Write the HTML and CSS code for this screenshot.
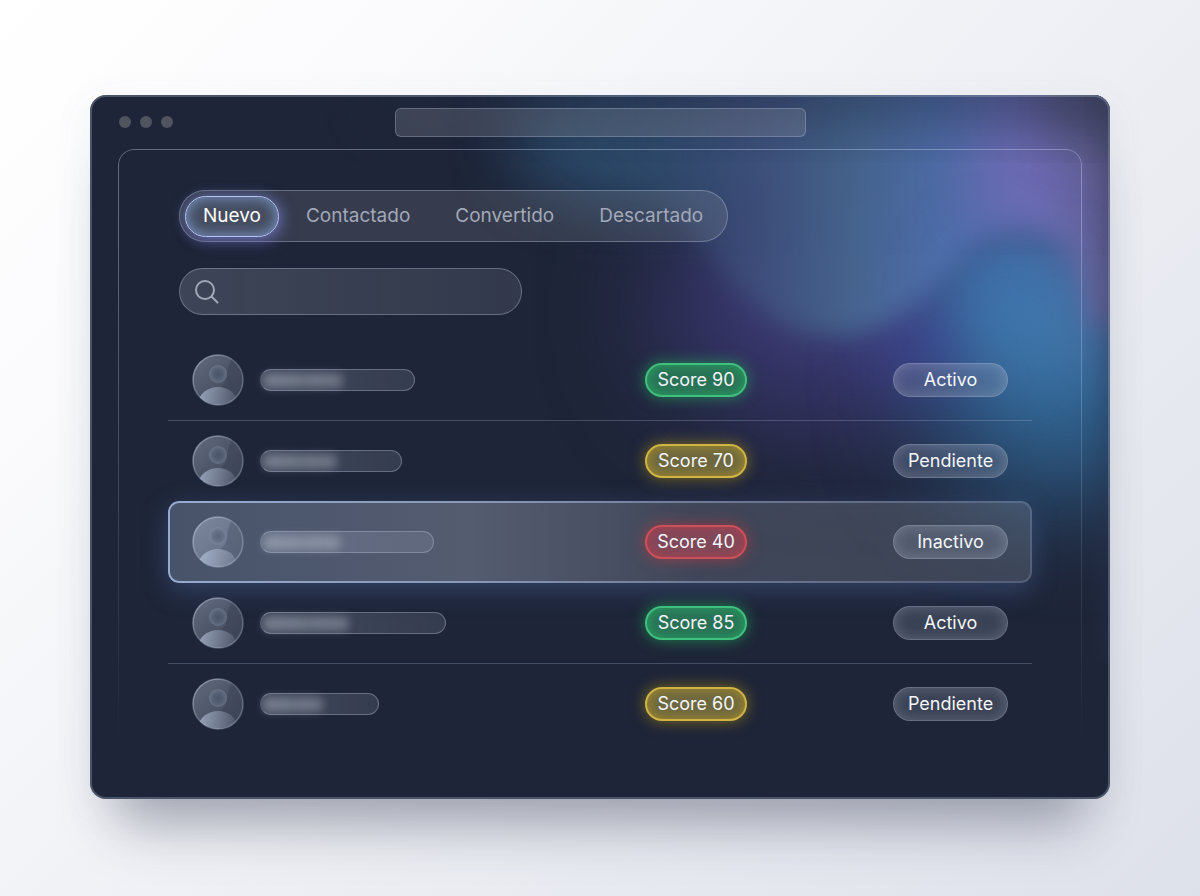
FILE: index.html
```
<!DOCTYPE html>
<html lang="es">
<head>
<meta charset="utf-8">
<meta name="viewport" content="width=device-width, initial-scale=1">
<title>Leads</title>
<link rel="stylesheet" href="styles.css">
</head>
<body>
<svg width="0" height="0" class="defs" aria-hidden="true">
  <defs>
    <linearGradient id="face" x1="0" y1="0" x2="1" y2="1">
      <stop offset="0" stop-color="#d3dff0" stop-opacity=".38"/>
      <stop offset=".5" stop-color="#d3dff0" stop-opacity=".26"/>
      <stop offset="1" stop-color="#d3dff0" stop-opacity=".2"/>
    </linearGradient>
    <linearGradient id="rim" x1="0" y1="0" x2="1" y2="1">
      <stop offset="0" stop-color="#cfdcf5" stop-opacity=".6"/>
      <stop offset=".5" stop-color="#cfdcf5" stop-opacity=".25"/>
      <stop offset="1" stop-color="#cfdcf5" stop-opacity=".35"/>
    </linearGradient>
    <linearGradient id="bust" x1="0" y1="0.2" x2="1" y2="0.3">
      <stop offset="0" stop-color="#cfdcf5" stop-opacity=".55"/>
      <stop offset="1" stop-color="#cfdcf5" stop-opacity=".06"/>
    </linearGradient>
    <radialGradient id="head">
      <stop offset="0" stop-color="#465268" stop-opacity=".5"/>
      <stop offset=".6" stop-color="#5c687e" stop-opacity=".5"/>
      <stop offset="1" stop-color="#8090a8" stop-opacity=".45"/>
    </radialGradient>
    <clipPath id="disc"><circle cx="26" cy="26" r="25"/></clipPath>
    <symbol id="avatar" viewBox="0 0 52 52">
      <circle cx="26" cy="26" r="25" fill="url(#face)"/>
      <g clip-path="url(#disc)">
        <path d="M40 3C38 9 36 13 35 20C35 27 32 31 28 33Q40 34 44 45L54 40V8Z" fill="#1c2438" opacity=".2"/>
        <ellipse cx="26" cy="48" rx="19" ry="15" fill="url(#bust)"/>
      </g>
      <circle cx="26" cy="20" r="9" fill="url(#head)"/>
      <circle cx="26" cy="26" r="25" fill="none" stroke="url(#rim)" stroke-width="1.5"/>
    </symbol>
  </defs>
</svg>
<main class="window">
  <svg class="aurora" viewBox="0 0 1020 704" preserveAspectRatio="none" aria-hidden="true">
    <defs>
      <filter id="soft" x="-30%" y="-30%" width="160%" height="160%" color-interpolation-filters="sRGB"><feGaussianBlur stdDeviation="12"/></filter>
      <filter id="haze" x="-80%" y="-80%" width="260%" height="260%" color-interpolation-filters="sRGB"><feGaussianBlur stdDeviation="32"/></filter>
      <filter id="mist" x="-80%" y="-80%" width="260%" height="260%" color-interpolation-filters="sRGB"><feGaussianBlur stdDeviation="55"/></filter>
      <linearGradient id="wave" gradientUnits="userSpaceOnUse" x1="360" y1="0" x2="1020" y2="0">
        <stop offset="0" stop-color="#28405a" stop-opacity="0"/>
        <stop offset=".12" stop-color="#283f5a" stop-opacity=".2"/>
        <stop offset=".3" stop-color="#30496a" stop-opacity=".5"/>
        <stop offset=".46" stop-color="#40517e" stop-opacity=".9"/>
        <stop offset=".6" stop-color="#476890"/>
        <stop offset=".74" stop-color="#5273b0"/>
        <stop offset=".88" stop-color="#716fba"/>
        <stop offset="1" stop-color="#6a6398"/>
      </linearGradient>
    </defs>
    <ellipse cx="760" cy="215" rx="195" ry="120" fill="#39366e" filter="url(#mist)"/>
    <ellipse cx="970" cy="280" rx="130" ry="125" fill="#30628f" filter="url(#mist)"/>
    <ellipse cx="840" cy="245" rx="60" ry="35" fill="#42429a" opacity=".7" filter="url(#haze)"/>
    <ellipse cx="950" cy="220" rx="85" ry="75" fill="#3f78ac" opacity=".9" filter="url(#haze)"/>
    <ellipse cx="570" cy="50" rx="150" ry="60" fill="#305274" opacity=".9" filter="url(#haze)"/>
    <path d="M340-60C400 90 560 100 600 150C640 200 680 240 745 240C800 240 835 205 880 165C930 130 980 140 1000 270L1090 260V-60Z" fill="url(#wave)" opacity=".35" filter="url(#haze)"/>
    <path d="M340-60C400 70 560 70 600 130C640 190 680 240 745 240C800 240 835 205 880 155C930 120 980 120 1000 230L1090 220V-60Z" fill="url(#wave)" opacity=".85" filter="url(#soft)"/>
    <ellipse cx="915" cy="180" rx="60" ry="40" fill="#4175b2" opacity=".75" filter="url(#haze)"/>
    <ellipse cx="935" cy="80" rx="45" ry="50" fill="#7670be" opacity=".6" filter="url(#haze)"/>
    <ellipse cx="1020" cy="0" rx="70" ry="50" fill="#44475e" opacity=".8" filter="url(#haze)"/>
    <rect x="300" y="-40" width="760" height="60" fill="#222b45" opacity=".6" filter="url(#haze)"/>
    <rect x="1012" y="-60" width="60" height="620" fill="#2b3350" opacity=".4" filter="url(#soft)"/>
  </svg>
  <header class="titlebar">
    <div class="lights"><span></span><span></span><span></span></div>
    <input class="address" type="text" aria-label="Dirección">
  </header>
  <section class="panel">
    <nav class="tabs">
      <button class="tab tab-active" type="button">Nuevo</button>
      <button class="tab" type="button">Contactado</button>
      <button class="tab" type="button">Convertido</button>
      <button class="tab" type="button">Descartado</button>
    </nav>
    <label class="search">
      <svg width="26" height="26" viewBox="0 0 26 26" fill="none" stroke="#a1a8b8" stroke-width="2" stroke-linecap="round" aria-hidden="true"><circle cx="11" cy="11" r="9"/><path d="M17.5 17.5L23.5 23.5"/></svg>
      <input type="search" aria-label="Buscar">
    </label>
    <table class="leads">
      <tbody>
        <tr class="lead">
          <td class="who"><svg class="avatar"><use href="#avatar"/></svg><span class="name" style="width:155px"><i class="smudge" style="width:80px"></i></span></td>
          <td class="score-cell"><span class="pill score green">Score 90</span></td>
          <td><span class="pill status">Activo</span></td>
        </tr>
        <tr class="lead">
          <td class="who"><svg class="avatar"><use href="#avatar"/></svg><span class="name" style="width:142px"><i class="smudge" style="width:74px"></i></span></td>
          <td class="score-cell"><span class="pill score yellow">Score 70</span></td>
          <td><span class="pill status">Pendiente</span></td>
        </tr>
        <tr class="lead lead-selected">
          <td class="who"><svg class="avatar"><use href="#avatar"/></svg><span class="name" style="width:174px"><i class="smudge" style="width:78px"></i></span></td>
          <td class="score-cell"><span class="pill score red">Score 40</span></td>
          <td><span class="pill status">Inactivo</span></td>
        </tr>
        <tr class="lead">
          <td class="who"><svg class="avatar"><use href="#avatar"/></svg><span class="name" style="width:186px"><i class="smudge" style="width:86px"></i></span></td>
          <td class="score-cell"><span class="pill score green">Score 85</span></td>
          <td><span class="pill status">Activo</span></td>
        </tr>
        <tr class="lead">
          <td class="who"><svg class="avatar"><use href="#avatar"/></svg><span class="name" style="width:119px"><i class="smudge" style="width:60px"></i></span></td>
          <td class="score-cell"><span class="pill score yellow">Score 60</span></td>
          <td><span class="pill status">Pendiente</span></td>
        </tr>
      </tbody>
    </table>
  </section>
</main>
</body>
</html>
```
FILE: styles.css
```
* {
  box-sizing: border-box;
}

body {
  margin: 0;
  min-height: 100vh;
  padding: 95px 90px 96px;
  font-family: Inter, "Liberation Sans", sans-serif;
  background: linear-gradient(135deg, #ffffff 0%, #fbfbfd 20%, #eceef3 58%, #dde1ea 100%);
}

.defs {
  position: absolute;
}

.window {
  position: relative;
  border-radius: 16px;
  background: #1e2538;
  box-shadow: 0 54px 50px -28px rgba(50, 54, 80, .38), 0 10px 40px rgba(90, 96, 120, .08);
}

.window::after {
  content: "";
  position: absolute;
  inset: 0;
  border: 2px solid rgba(150, 165, 185, .38);
  border-radius: 16px;
  pointer-events: none;
}

.aurora {
  position: absolute;
  inset: 0;
  width: 100%;
  height: 100%;
  border-radius: 16px;
  overflow: hidden;
}

.titlebar {
  position: relative;
  display: grid;
  grid-template-columns: 1fr 411px 1fr;
  align-items: center;
  height: 54px;
  padding: 0 29px;
}

.lights {
  display: flex;
  gap: 9px;
}

.lights span {
  width: 12px;
  height: 12px;
  border-radius: 50%;
  background: #50545f;
}

.address {
  height: 29px;
  border: 1px solid rgba(190, 205, 230, .3);
  border-radius: 6px;
  background: rgba(150, 155, 165, .26);
  outline: none;
}

.panel {
  position: relative;
  margin: 0 28px;
  padding: 41px 50px 54px;
}

.panel::before {
  content: "";
  position: absolute;
  inset: 0;
  border: 1px solid rgba(190, 205, 235, .42);
  border-bottom: 0;
  border-radius: 16px 16px 0 0;
  -webkit-mask-image: linear-gradient(#000 10%, transparent 92%);
  mask-image: linear-gradient(#000 10%, transparent 92%);
  pointer-events: none;
}

.tabs {
  position: relative;
  display: flex;
  align-items: center;
  gap: 9px;
  width: fit-content;
  height: 52px;
  margin-left: 11px;
  padding: 0 6px 0 5px;
  border: 1px solid rgba(190, 200, 225, .36);
  border-radius: 26px;
  background: rgba(150, 155, 165, .2);
}

.tab {
  height: 41px;
  padding: 0 18px;
  border: 0;
  border-radius: 21px;
  background: none;
  color: #a2a8b8;
  font: 400 19px/24px Inter, "Liberation Sans", sans-serif;
}

.tab-active {
  padding: 0 17px;
  color: #fff;
  border: 1px solid #b3c2f0;
  background: #454d60;
  box-shadow: inset 0 0 14px rgba(140, 175, 235, .8), 0 0 14px rgba(125, 145, 220, .55), 4px 5px 16px rgba(120, 110, 210, .4);
}

.search {
  position: relative;
  display: flex;
  align-items: center;
  gap: 10px;
  width: 343px;
  height: 47px;
  margin: 26px 0 25px 11px;
  padding: 0 14px;
  border: 1px solid rgba(190, 200, 225, .36);
  border-radius: 24px;
  background: linear-gradient(90deg, rgba(165, 175, 190, .23), rgba(160, 165, 180, .16));
}

.search input {
  flex: 1;
  min-width: 0;
  border: 0;
  outline: none;
  background: none;
  color: #fff;
  font: 400 19px/24px Inter, "Liberation Sans", sans-serif;
}

.leads,
.leads tbody {
  display: block;
  position: relative;
}

.lead {
  position: relative;
  display: grid;
  grid-template-columns: 1fr auto auto;
  align-items: center;
  height: 81px;
  padding: 0 24px;
  border-bottom: 1px solid rgba(170, 185, 215, .28);
}

.lead:nth-child(2),
.lead:nth-child(3),
.lead:last-child {
  border-bottom-color: transparent;
}

.lead-selected::before {
  content: "";
  position: absolute;
  inset: -1px 0;
  border-radius: 11px;
  background: linear-gradient(90deg, rgba(145, 165, 195, .36), rgba(160, 168, 190, .42) 35%, rgba(160, 165, 178, .26) 62%, rgba(150, 160, 175, .26));
  box-shadow: 0 7px 26px rgba(90, 120, 185, .36);
}

.lead-selected::after {
  content: "";
  position: absolute;
  inset: -1px 0;
  border: 2px solid rgba(185, 208, 250, .7);
  border-radius: 11px;
  -webkit-mask-image: linear-gradient(90deg, #000, rgba(0, 0, 0, .25));
  mask-image: linear-gradient(90deg, #000, rgba(0, 0, 0, .25));
  pointer-events: none;
}

.lead td {
  position: relative;
  padding: 0;
}

.leads .who {
  display: flex;
  align-items: center;
  gap: 16px;
}

.leads .score-cell {
  padding-right: 146px;
}

.avatar {
  display: block;
  width: 52px;
  height: 52px;
}

.name {
  display: flex;
  align-items: center;
  height: 22px;
  padding-left: 2px;
  border: 1px solid rgba(190, 200, 225, .34);
  border-left-color: rgba(190, 200, 225, .1);
  border-radius: 11px;
  background: linear-gradient(90deg, rgba(165, 175, 195, .26), rgba(160, 168, 190, .18));
}

.smudge {
  height: 15px;
  border-radius: 6px;
  background: linear-gradient(90deg, rgba(200, 208, 218, .4), rgba(200, 208, 218, .36) 45%, rgba(200, 208, 218, .3) 52%, rgba(200, 208, 218, .36) 60%, rgba(200, 208, 218, .34));
  filter: blur(4px);
}

.pill {
  display: flex;
  align-items: center;
  justify-content: center;
  height: 34px;
  border-radius: 17px;
  color: #f4f6fa;
  font-size: 18px;
  line-height: 24px;
  white-space: nowrap;
}

.score {
  width: 102px;
  border: 2px solid;
}

.green {
  border-color: #3fc07f;
  background: #2a7257;
  box-shadow: inset 0 0 12px rgba(35, 185, 100, .7), 0 0 15px rgba(35, 180, 90, .65);
}

.yellow {
  border-color: #d0b444;
  background: #6e6840;
  box-shadow: inset 0 0 12px rgba(190, 160, 30, .7), 0 0 15px rgba(190, 155, 20, .6);
}

.red {
  border-color: #cc5058;
  background: #80495a;
  box-shadow: inset 0 0 12px rgba(205, 55, 65, .6), 0 0 15px rgba(220, 55, 60, .55);
}

.status {
  width: 115px;
  border: 1px solid rgba(200, 208, 228, .32);
  background: rgba(150, 158, 178, .24);
  box-shadow: inset 0 0 14px rgba(205, 212, 230, .26);
}
```
